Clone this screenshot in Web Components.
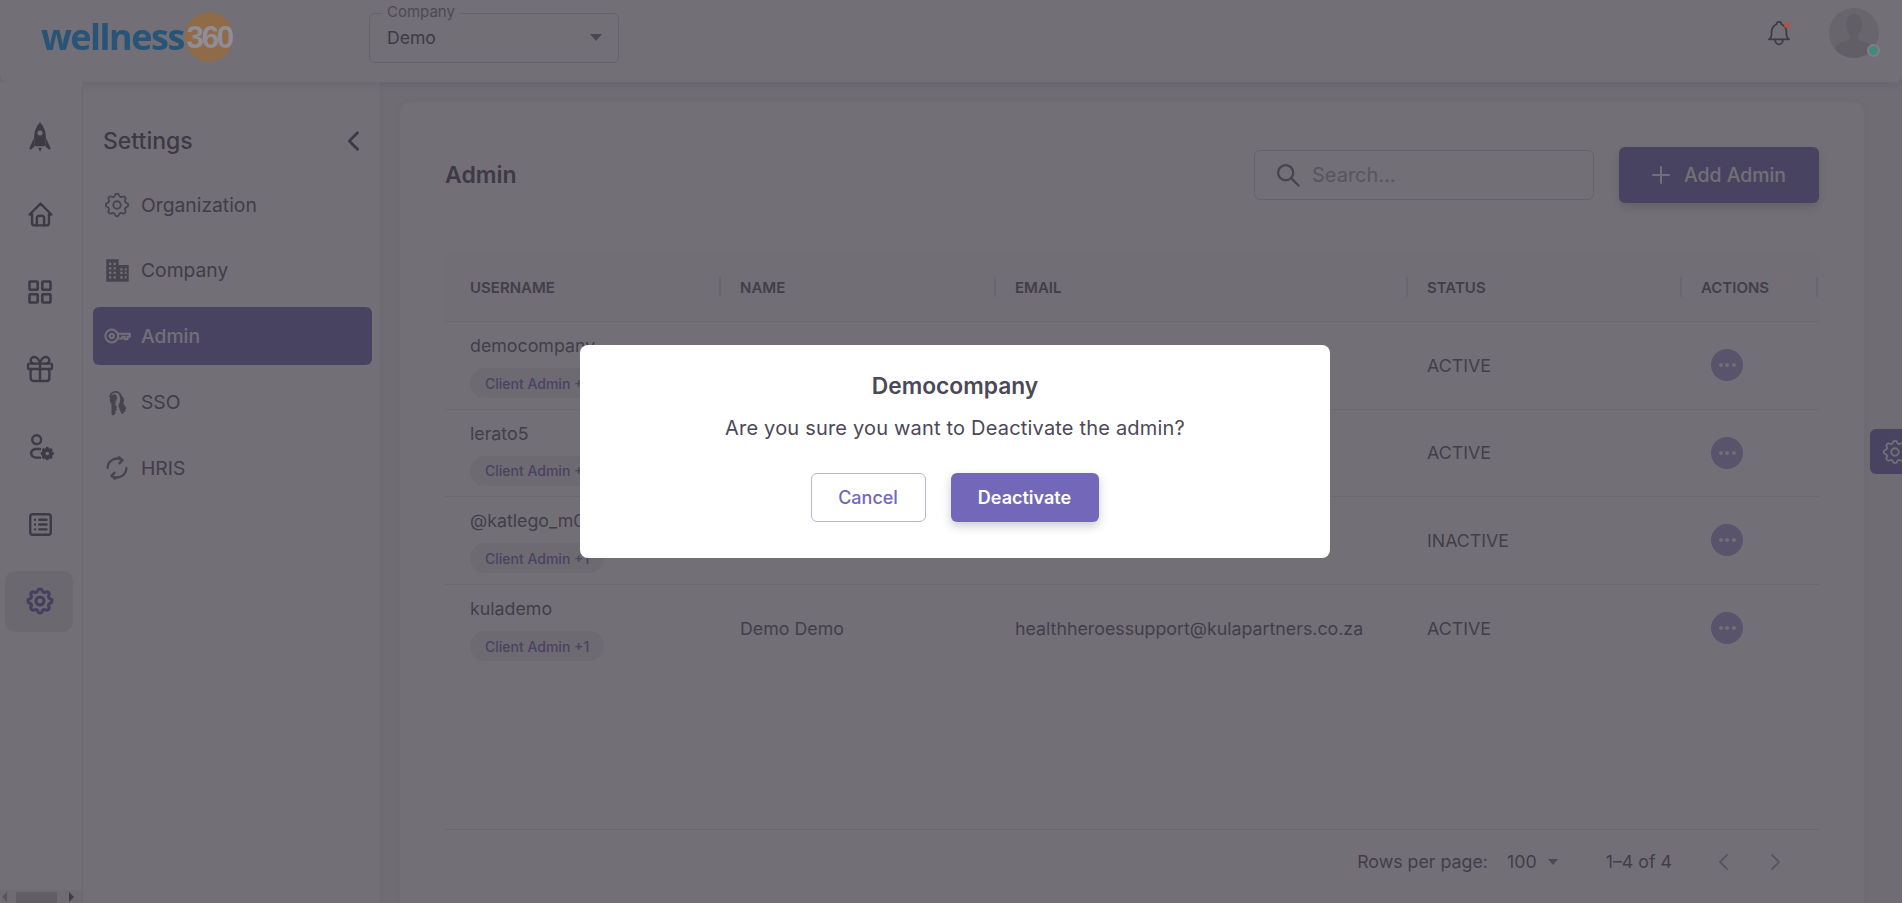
<!DOCTYPE html>
<html lang="en">
<head>
<meta charset="utf-8">
<title>Wellness360 - Admin</title>
<style>
  html, body { margin: 0; height: 100%; overflow: hidden; background: #f4f4f7; }
  body { font-family: "Inter", "Liberation Sans", sans-serif; color: #4b4858; }
</style>
</head>
<body>
<wl-app>
  <wl-header slot="header"></wl-header>
  <wl-rail slot="rail"></wl-rail>
  <wl-settings-nav slot="nav"></wl-settings-nav>
  <wl-admin-page slot="page"></wl-admin-page>
</wl-app>
<wl-dialog heading="Democompany" body="Are you sure you want to Deactivate the admin?" confirm="Deactivate"></wl-dialog>

<script>
const GEAR_PATH = "M10.325 4.317c.426-1.756 2.924-1.756 3.35 0a1.724 1.724 0 0 0 2.573 1.066c1.543-.94 3.31.826 2.37 2.37a1.724 1.724 0 0 0 1.065 2.572c1.756.426 1.756 2.924 0 3.35a1.724 1.724 0 0 0-1.066 2.573c.94 1.543-.826 3.31-2.37 2.37a1.724 1.724 0 0 0-2.572 1.065c-.426 1.756-2.924 1.756-3.35 0a1.724 1.724 0 0 0-2.573-1.066c-1.543.94-3.31-.826-2.37-2.37a1.724 1.724 0 0 0-1.065-2.572c-1.756-.426-1.756-2.924 0-3.35a1.724 1.724 0 0 0 1.066-2.573c-.94-1.543.826-3.31 2.37-2.37c1 .608 2.296.07 2.572-1.065z";

const ICONS = {
  home: '<path d="M5 12H3l9-9 9 9h-2"/><path d="M5 12v7a2 2 0 0 0 2 2h10a2 2 0 0 0 2-2v-7"/><path d="M9 21v-6a2 2 0 0 1 2-2h2a2 2 0 0 1 2 2v6"/>',
  grid: '<rect x="3" y="3" width="7" height="7" rx=".6"/><rect x="14" y="3" width="7" height="7" rx=".6"/><rect x="3" y="14" width="7" height="7" rx=".6"/><rect x="14" y="14" width="7" height="7" rx=".6"/>',
  gift: '<rect x="3" y="8" width="18" height="4" rx="1"/><path d="M12 8v13"/><path d="M19 12v7a2 2 0 0 1-2 2H7a2 2 0 0 1-2-2v-7"/><path d="M7.5 8a2.5 2.5 0 0 1 0-5C9.5 3 11.5 5 12 8c.5-3 2.500-5 4.500-5a2.500 2.500 0 0 1 0 5"/>',
  usercog: `<circle cx="9.500" cy="6.500" r="3.300"/><path d="M12 13.500H8.500a5 3.500 0 0 0 0 6.500H12"/><g transform="translate(11.200 10.700) scale(.52)"><path d="${GEAR_PATH}" fill="currentColor" stroke-width="1.500"/><circle cx="12" cy="12" r="2.600" fill="#fff" stroke="none"/></g>`,
  list: '<rect x="3.500" y="3.500" width="17" height="17" rx="2"/><path d="M11 8h6M11 12h6M11 16h6M7.500 8h.01M7.500 12h.01M7.500 16h.01"/>',
  gear: `<path d="${GEAR_PATH}"/><circle cx="12" cy="12" r="3"/>`,
  key: '<circle cx="7.500" cy="12" r="5.500"/><circle cx="7.500" cy="12" r="1.800"/><path d="M13 10h10v2.600h-2v2.200h-2.400v-2.200h-2v1.600H14"/>',
  sync: '<path d="M19.500 12a7.500 7.500 0 0 1-11.600 6.300"/><path d="M4.500 12a7.500 7.500 0 0 1 11.600-6.300"/><path d="M13.500 3.300l3 2.400-2.600 2.600"/><path d="M10.500 20.700l-3-2.400 2.600-2.600"/>',
  chevronleft: '<path d="M15 5l-7 7 7 7"/>',
  chevronright: '<path d="M9 5l7 7-7 7"/>',
  search: '<circle cx="10" cy="10" r="6.500"/><path d="M15 15l6 6"/>',
  plus: '<path d="M12 4v16M4 12h16"/>',
  bell: '<path d="M10 5a2 2 0 1 1 4 0a7 7 0 0 1 4 6v3a4 4 0 0 0 2 3H4a4 4 0 0 0 2-3v-3a7 7 0 0 1 4-6"/><path d="M9 17v1a3 3 0 0 0 6 0v-1"/>',
  rocket: '<path fill="currentColor" stroke="none" d="M12 1c-3 3-4.400 7-4.400 11 0 2.600.3 5 1 7h6.800c.7-2 1-4.400 1-7 0-4-1.400-8-4.400-11z"/><path fill="currentColor" stroke="none" d="M7.400 13 4 20.500l1 1 3.200-2.500zM16.600 13 20 20.500l-1 1-3.200-2.500zM10.500 20h3l-1.500 3z"/><circle cx="12" cy="9" r="1.900" fill="#fff" stroke="none"/>',
  building: '<path fill="currentColor" stroke="none" fill-rule="evenodd" d="M2 2h11v5h9v15H2zM4.500 5v2h2V5zm4 0v2h2V5zM4.500 9v2h2V9zm4 0v2h2V9zm6 1v2h2v-2zM4.500 13v2h2v-2zm4 0v2h2v-2zm6 0v2h2v-2zm4-3v2h1.500v-2zm0 3v2h1.500v-2zM4.500 17v2h2v-2zm4 0v2h2v-2zm6 0v2h2v-2zm4 0v2h1.500v-2z"/>',
  keys: '<path d="M15 7a4.500 5 0 0 0-8.500.5"/><path fill="currentColor" stroke="none" d="M8 6.500c2-1.500 4-.5 4 2 0 1.500-.6 2.500-1.200 3.200v3l1.300 1.300-1 1 1 1.200-1.300 1-.2 2.300-2 1.500-1-1.500v-8C6 12 5.500 8 8 6.500zM14 6.500c2.500.2 4 2.200 3.500 5l-.5 1.500 2.500 4-1 .9.500 1.500-1.500.6-.5 1.500-1.700-.5-2.300-6c1-1.500 1.500-3 1.500-5 0-1.200-.2-2.400-.5-3.500z"/>'
};

function icon(name, size, sw) {
  return `<svg xmlns="http://www.w3.org/2000/svg" width="${size}" height="${size}" viewBox="0 0 24 24" fill="none" stroke="currentColor" stroke-width="${sw || 2}" stroke-linecap="round" stroke-linejoin="round" aria-hidden="true">${ICONS[name]}</svg>`;
}

// base class, only saves the boilerplate
class WlElement extends HTMLElement {
  constructor() {
    super();
    this.attachShadow({ mode: "open" });
  }
  connectedCallback() {
    this.shadowRoot.innerHTML = this.render();
  }
}

class WlApp extends WlElement {
  render() {
    return `
    <style>
      :host { display: flex; flex-direction: column; height: 100vh; overflow: hidden; }
      .body { flex: 1; display: flex; min-height: 0; }
    </style>
    <slot name="header"></slot>
    <div class="body">
      <slot name="rail"></slot>
      <slot name="nav"></slot>
      <slot name="page"></slot>
    </div>`;
  }
}

class WlHeader extends WlElement {
  render() {
    return `
    <style>
      /* no z-index here: logo and dots have to climb over the backdrop */
      :host { display: flex; align-items: center; height: 82px; flex: none; background: #fff; padding: 0 23px 0 41px; box-sizing: border-box; box-shadow: 0 4px 10px rgba(47,43,61,.12); position: relative; border-radius: 0 0 8px 8px; }
      .logo { display: flex; align-items: center; width: 192px; height: 50px; margin-top: -8px; position: relative; z-index: 1100; }
      .word { font: 700 36px/50px "Open Sans", "Liberation Sans", sans-serif; letter-spacing: -1.500px; color: #285478; }
      .ball { flex: none; width: 48px; height: 50px; margin-left: auto; border-radius: 50%; background: #8f6b47; color: #8f8d9a; font: 700 32px/50px "Liberation Sans", sans-serif; letter-spacing: -2.600px; display: flex; justify-content: center; }
      .select { width: 250px; height: 50px; box-sizing: border-box; margin: -7px 0 0 136px; border: 1px solid #d3d2d8; border-radius: 6px; display: flex; align-items: center; justify-content: space-between; padding: 0 16px 0 17px; position: relative; font-size: 17.600px; color: #4b4858; }
      .select label { position: absolute; left: 12px; top: -11px; background: #fff; padding: 0 5px; font-size: 15px; line-height: 17px; color: #7f7d89; }
      .caret { width: 0; height: 0; border: 6px solid transparent; border-top: 7px solid #77757f; border-bottom: 0; }
      .right { margin-left: auto; display: flex; align-items: center; gap: 35px; margin-top: -16px; }
      .bell { position: relative; display: flex; color: #4b4858; }
      .bell i { position: absolute; right: 4px; top: 4px; width: 6px; height: 6px; border-radius: 50%; background: #b5504f; z-index: 1100; }
      .avatar { width: 50px; height: 50px; border-radius: 50%; background: #dcdce0; position: relative; }
      .avatar svg { display: block; border-radius: 50%; }
      .avatar i { position: absolute; right: -1px; bottom: 1px; width: 9px; height: 9px; border-radius: 50%; background: #3f8a7b; border: 2px solid #7f7d88; z-index: 1100; }
    </style>
    <div class="logo"><span class="word">wellness</span><span class="ball">360</span></div>
    <div class="select"><label>Company</label><span>Demo</span><span class="caret"></span></div>
    <div class="right">
      <span class="bell">${icon("bell", 30, 1.4)}<i></i></span>
      <span class="avatar">
        <svg width="50" height="50" viewBox="0 0 50 50"><path fill="#c4c3c9" d="M25 6c5 0 8 4 8 10 0 5-2 9-4 11v4c2 2 10 3 13 6 2 2 3 5 3 8-5 3-12 5-20 5S10 48 5 45c0-3 1-6 3-8 3-3 11-4 13-6v-4c-2-2-4-6-4-11 0-6 3-10 8-10z"/></svg>
        <i></i>
      </span>
    </div>`;
  }
}

class WlRail extends WlElement {
  render() {
    const items = [["rocket", 32, 2], ["home", 29, 2], ["grid", 28, 2.2], ["gift", 32, 1.8], ["usercog", 32, 1.8], ["list", 29, 2], ["gear", 32, 2.3]];
    return `
    <style>
      :host { display: flex; flex-direction: column; width: 83px; flex: none; box-sizing: border-box; background: #fff; border-right: 1px solid #e6e5e9; position: relative; padding: 24px 0 0 5px; }
      .item { width: 68px; height: 61px; margin-bottom: 16.600px; display: flex; align-items: center; justify-content: center; color: #4b4858; border-radius: 10px; padding-left: 2px; box-sizing: border-box; }
      .item.on { background: #ebe6ea; color: #6558b0; margin-top: -1px; }
      .bar { position: absolute; left: 0; right: 0; bottom: 0; height: 13px; background: #f1f1f1; display: flex; align-items: center; justify-content: space-between; padding: 0 8px 0 2px; box-sizing: border-box; }
      .thumb { position: absolute; left: 16px; width: 41px; top: 2px; bottom: 0; background: #c1c1c1; }
      .l { border: 5px solid transparent; border-right: 5px solid #a3a3a3; border-left: 0; }
      .r { border: 5px solid transparent; border-left: 5px solid #505050; border-right: 0; }
    </style>
    ${items.map(([n, size, sw]) => `<div class="item ${n === "gear" ? "on" : ""}">${icon(n, size, sw)}</div>`).join("")}
    <div class="bar"><span class="l"></span><span class="thumb"></span><span class="r"></span></div>`;
  }
}

class WlSettingsNav extends WlElement {
  render() {
    const items = [["gear", "Organization", 30, 1.5], ["building", "Company", 27, 1.5], ["key", "Admin", 28, 1.7, 1], ["keys", "SSO", 30, 1.5], ["sync", "HRIS", 30, 1.8]];
    return `
    <style>
      :host { display: block; width: 298px; flex: none; box-sizing: border-box; background: #fff; border-right: 1px solid #e6e5e9; padding: 42px 8px 0 10px; }
      h2 { margin: 0 0 17.500px; padding: 0 10px; height: 34px; display: flex; align-items: center; justify-content: space-between; font-size: 23px; font-weight: 500; color: #4b4858; }
      h2 svg { margin-right: -6px; }
      .item { height: 58px; margin-bottom: 7.800px; border-radius: 6px; display: flex; align-items: center; padding-left: 9px; font-size: 19.300px; line-height: 22px; color: #55525f; }
      .item .ic { width: 30px; display: flex; justify-content: center; margin-right: 9px; flex: none; color: #6f6d79; }
      .item.on { background: #7367b9; color: #fff; font-weight: 500; }
      .item.on .ic { color: #fff; }
    </style>
    <h2>Settings ${icon("chevronleft", 28, 2.5)}</h2>
    ${items.map(([ic, label, size, sw, on]) => `<div class="item ${on ? "on" : ""}"><span class="ic">${icon(ic, size, sw)}</span><span>${label}</span></div>`).join("")}`;
  }
}

class WlChip extends WlElement {
  render() {
    return `
    <style>
      :host { display: inline-flex; align-items: center; height: 30px; padding: 0 15px; border-radius: 15px; background: #ececef; color: #7367b9; font-size: 14px; font-weight: 500; white-space: nowrap; }
    </style>
    <slot></slot>`;
  }
}

class WlAdminPage extends WlElement {
  render() {
    const rows = [
      ["democompany", "", "", "ACTIVE"],
      ["lerato5", "", "", "ACTIVE"],
      ["@katlego_m0", "", "", "INACTIVE"],
      ["kulademo", "Demo Demo", "healthheroessupport@kulapartners.co.za", "ACTIVE"]
    ];
    const heads = ["Username", "Name", "Email", "Status", "Actions"];
    return `
    <style>
      :host { display: block; flex: 1; min-width: 0; padding: 20px 38px 0 19px; box-sizing: border-box; }
      .card { background: #fff; border-radius: 10px 10px 0 0; box-shadow: 0 2px 8px rgba(47,43,61,.08); height: 100%; box-sizing: border-box; padding: 45px 45px 0 45px; display: flex; flex-direction: column; }
      .top { display: flex; align-items: center; height: 56px; flex: none; }
      .top h1 { margin: 0; font-size: 23px; font-weight: 600; color: #4b4858; }
      .search { margin-left: auto; width: 340px; height: 50px; box-sizing: border-box; border: 1px solid #d3d2d8; border-radius: 6px; display: flex; align-items: center; gap: 10px; padding-left: 19px; color: #a7a5ae; font-size: 20px; }
      .search svg { color: #6d6b77; }
      .add { margin-left: 25px; width: 200px; height: 56px; border-radius: 6px; background: #7367b9; color: #fff; display: flex; align-items: center; justify-content: center; gap: 11px; padding-right: 3px; box-sizing: border-box; font-size: 19.400px; font-weight: 500; box-shadow: 0 4px 10px rgba(47,43,61,.25); }
      .table { margin-top: 49px; flex: 1; display: flex; flex-direction: column; }
      .row { display: grid; grid-template-columns: 274px 275px 412px 274px 138px; align-items: center; height: 87.500px; box-sizing: border-box; border-bottom: 1px solid #e8e7ea; }
      .row.last { border-bottom: 0; }
      .head { height: 70px; border-bottom: 1px solid #e8e7ea; background: #fafafb; font-size: 15px; font-weight: 600; color: #5a5866; text-transform: uppercase; padding-top: 2px; }
      .head span { position: relative; padding-left: 21px; display: block; }
      .head span + span::before, .head span:last-child::after { content: ""; position: absolute; left: 0; top: -1px; height: 20px; border-left: 2px solid #e2e1e5; }
      .head span:last-child::after { left: auto; right: 0; }
      .head span:first-child { padding-left: 25px; }
      .cell { padding-left: 21px; font-size: 17.800px; color: #5a5866; white-space: nowrap; min-width: 0; }
      .user { padding-left: 25px; padding-top: 3px; display: flex; flex-direction: column; align-items: flex-start; gap: 12px; }
      .dots { margin-left: 31px; width: 32px; height: 32px; border-radius: 50%; background: #a8a1d8; display: flex; align-items: center; justify-content: center; gap: 2.500px; }
      .dots i { width: 4px; height: 4px; border-radius: 50%; background: #fff; }
      .foot { margin-top: auto; height: 74px; border-top: 1px solid #e4e3e7; flex: none; display: flex; align-items: center; justify-content: flex-end; font-size: 17.800px; color: #5a5866; padding: 0 32px 10px 0; box-sizing: border-box; }
      .foot .val { margin-left: 19px; }
      .caret { width: 0; height: 0; border: 5.500px solid transparent; border-top: 6px solid #7d7b87; border-bottom: 0; margin-left: 11px; }
      .count { margin-left: 48px; }
      .pg { color: #a5a4ac; display: flex; }
      .pg.a { margin-left: 40px; }
      .pg.b { margin-left: 27px; }
    </style>
    <div class="card">
      <div class="top">
        <h1>Admin</h1>
        <div class="search">${icon("search", 28, 2)}<span>Search...</span></div>
        <div class="add">${icon("plus", 24, 2)}<span>Add Admin</span></div>
      </div>
      <div class="table">
        <div class="row head">${heads.map(h => `<span>${h}</span>`).join("")}</div>
        ${rows.map((r, i) => `
        <div class="row ${i === rows.length - 1 ? "last" : ""}">
          <div class="cell user"><span>${r[0]}</span><wl-chip>Client Admin +1</wl-chip></div>
          <div class="cell">${r[1]}</div>
          <div class="cell">${r[2]}</div>
          <div class="cell">${r[3]}</div>
          <div><div class="dots"><i></i><i></i><i></i></div></div>
        </div>`).join("")}
        <div class="foot">
          <span>Rows per page:</span><span class="val">100</span><span class="caret"></span>
          <span class="count">1–4 of 4</span>
          <span class="pg a">${icon("chevronleft", 24, 1.8)}</span><span class="pg b">${icon("chevronright", 24, 1.8)}</span>
        </div>
      </div>
    </div>
    <div class="tab" style="position:fixed;right:0;top:429px;width:32px;height:45px;background:#7367b9;border-radius:6px 0 0 6px;color:#fff;display:flex;align-items:center;padding-left:10px;box-sizing:border-box;overflow:hidden"><span style="flex:none;display:flex">${icon("gear", 30, 1.5)}</span></div>`;
  }
}

class WlDialog extends WlElement {
  render() {
    return `
    <style>
      :host { position: fixed; inset: 0; z-index: 1000; display: flex; align-items: flex-start; justify-content: center; background: rgba(56,52,62,.71); }
      .box { width: 750px; height: 213px; margin-top: 345px; margin-left: 8px; box-sizing: border-box; background: #fff; border-radius: 8px; padding: 26px 0 0; text-align: center; color: #4b4858; position: relative; z-index: 1200; }
      h3 { margin: 0; font-size: 22.800px; line-height: 30px; font-weight: 600; }
      p { margin: 12px 0 0; font-size: 20px; line-height: 30px; letter-spacing: .19px; }
      .btns { display: flex; justify-content: center; gap: 25px; margin-top: 30px; align-items: flex-start; padding-right: 1px; }
      .btn { height: 49px; box-sizing: border-box; border-radius: 6px; display: flex; align-items: center; justify-content: center; font-size: 18px; font-weight: 500; }
      .cancel { width: 115px; border: 1px solid #b9b3dc; color: #7367b9; }
      .ok { width: 148px; background: #7367b9; color: #fff; font-weight: 600; box-shadow: 0 4px 10px rgba(47,43,61,.25); }
    </style>
    <div class="box">
      <h3>${this.getAttribute("heading")}</h3>
      <p>${this.getAttribute("body")}</p>
      <div class="btns"><div class="btn cancel">Cancel</div><div class="btn ok">${this.getAttribute("confirm")}</div></div>
    </div>`;
  }
}

customElements.define("wl-app", WlApp);
customElements.define("wl-header", WlHeader);
customElements.define("wl-rail", WlRail);
customElements.define("wl-settings-nav", WlSettingsNav);
customElements.define("wl-chip", WlChip);
customElements.define("wl-admin-page", WlAdminPage);
customElements.define("wl-dialog", WlDialog);
</script>
</body>
</html>
